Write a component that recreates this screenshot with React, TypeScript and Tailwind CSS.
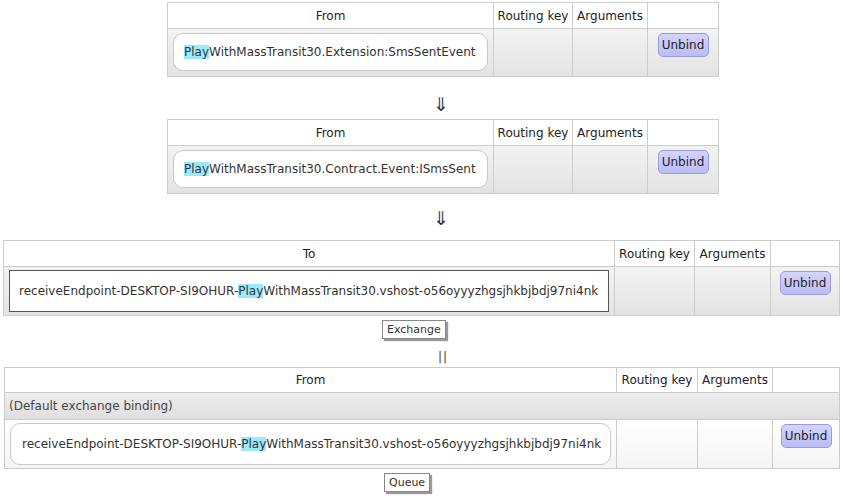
import React from "react";

const font = { fontFamily: '"DejaVu Sans", Verdana, sans-serif' };

function Hl({ text }: { text: string }) {
  const i = text.indexOf("Play");
  return (
    <>
      {text.slice(0, i)}
      <span className="bg-[#99e9ff]">Play</span>
      {text.slice(i + 4)}
    </>
  );
}

function UnbindBtn() {
  return (
    <button className="h-[24px] w-[51px] rounded-[5px] border border-[#9a9ade] bg-gradient-to-b from-[#d4d4ff] to-[#bcbcf6] text-[12px] text-[#222] leading-none">
      Unbind
    </button>
  );
}

type TProps = {
  cols: number[];
  head: string;
  kind: "pill" | "box";
  text: string;
  defaultRow?: boolean;
  className?: string;
};

function BindTable({ cols, head, kind, text, defaultRow, className }: TProps) {
  const bodyBg = defaultRow
    ? "bg-gradient-to-b from-[#ffffff] to-[#f4f4f4]"
    : "bg-gradient-to-b from-[#f3f3f3] to-[#e3e3e3]";
  return (
    <table className={"table-fixed border-collapse border border-[#cccccc] text-[12px] text-[#222] " + (className ?? "")}>
      <colgroup>
        {cols.map((w, i) => (
          <col key={i} style={{ width: w }} />
        ))}
      </colgroup>
      <thead>
        <tr className={(defaultRow ? "h-[25px]" : "h-[26px]") + " bg-white"}>
          <th className="border border-[#cccccc] p-0 font-normal text-center">{head}</th>
          <th className="border border-[#cccccc] p-0 font-normal text-center whitespace-nowrap">Routing key</th>
          <th className="border border-[#cccccc] p-0 font-normal text-center">Arguments</th>
          <th className="border border-[#cccccc] p-0"></th>
        </tr>
      </thead>
      <tbody>
        {defaultRow && (
          <tr className="h-[27px] bg-gradient-to-b from-[#eeeeee] to-[#dedede]">
            <td colSpan={4} className="border border-[#cccccc] px-[4px] py-0 text-[#444]">
              (Default exchange binding)
            </td>
          </tr>
        )}
        <tr className={"h-[48px] " + bodyBg}>
          <td className="border border-[#cccccc] px-[5px] py-[3px] align-top">
            {kind === "pill" ? (
              <div className={"flex items-center rounded-[10px] border border-[#c8c8c8] bg-white text-[#333] whitespace-nowrap " + (defaultRow ? "h-[42px] pl-[11px]" : "mt-[1px] h-[38px] pl-[10px]")}>
                <span><Hl text={text} /></span>
              </div>
            ) : (
              <div className="flex h-[42px] items-center border border-[#555] bg-white pl-[9px] text-[#333] whitespace-nowrap">
                <span><Hl text={text} /></span>
              </div>
            )}
          </td>
          <td className="border border-[#cccccc] p-0"></td>
          <td className="border border-[#cccccc] p-0"></td>
          <td className="border border-[#cccccc] pt-[4px] px-0 align-top text-center">
            <UnbindBtn />
          </td>
        </tr>
      </tbody>
    </table>
  );
}

function Arrow({ h }: { h: string }) {
  return (
    <div className={"ml-[433px] flex items-center text-[19px] leading-none text-[#333] " + h}>⇓</div>
  );
}

function Label({ text, ml }: { text: string; ml: string }) {
  return (
    <div className={"border border-[#888] bg-white px-[4px] text-[11px] leading-[17px] text-[#333] shadow-[2px_2px_1px_#999] " + ml}>
      {text}
    </div>
  );
}

const ep = "receiveEndpoint-DESKTOP-SI9OHUR-PlayWithMassTransit30.vshost-o56oyyyzhgsjhkbjbdj97ni4nk";

export default function App() {
  return (
    <div className="flex h-[498px] w-[843px] flex-col items-start bg-white" style={font}>
      <BindTable
        className="ml-[167px] mt-[2px]"
        cols={[326, 79, 75, 71]}
        head="From"
        kind="pill"
        text="PlayWithMassTransit30.Extension:SmsSentEvent"
      />
      <Arrow h="h-[42px] pt-[12px]" />
      <BindTable
        className="ml-[167px]"
        cols={[326, 79, 75, 71]}
        head="From"
        kind="pill"
        text="PlayWithMassTransit30.Contract.Event:ISmsSent"
      />
      <Arrow h="h-[46px] pt-[2px]" />
      <BindTable
        className="ml-[3px]"
        cols={[611, 80, 76, 69]}
        head="To"
        kind="box"
        text={ep}
      />
      <div className="mt-[4px]">
        <Label text="Exchange" ml="ml-[382px]" />
      </div>
      <div className="ml-[438px] flex h-[28px] items-center pt-[8px] text-[12px] tracking-[1px] text-[#444]">||</div>
      <BindTable
        className="ml-[4px]"
        cols={[612, 81, 75, 67]}
        head="From"
        kind="pill"
        text={ep}
        defaultRow
      />
      <div className="mt-[4px]">
        <Label text="Queue" ml="ml-[384px]" />
      </div>
    </div>
  );
}
